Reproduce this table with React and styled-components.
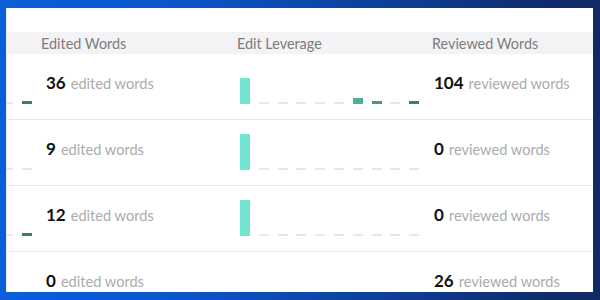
import React from "react";
import styled, { createGlobalStyle } from "styled-components";

const GlobalStyle = createGlobalStyle`
  html, body {
    margin: 0;
    padding: 0;
  }
  body {
    width: 600px;
    height: 300px;
    overflow: hidden;
    background: linear-gradient(90deg, #0a5fd8 0%, #0b56c9 30%, #0d3f98 65%, #102c6e 90%, #112a66 100%);
    font-family: "Lato", "Liberation Sans", sans-serif;
  }
`;

const Page = styled.div`
  padding: 8px 7px;
`;

const Panel = styled.div`
  background: #ffffff;
  height: 284px;
  overflow: hidden;
  box-shadow: -1px 0 0 #e8eef8;
`;

const TopGap = styled.div`
  height: 24px;
`;

const Grid = styled.div`
  display: grid;
  grid-template-columns: 30px 196px 195px 1fr;
`;

const HeaderRow = styled(Grid)`
  height: 22px;
  background: #f3f3f5;
  align-items: center;
`;

const HeaderCell = styled.div`
  padding-left: 4px;
  font-size: 14.4px;
  color: #7c7c7c;
  white-space: nowrap;
`;

const Row = styled(Grid)`
  height: 65px;
  border-bottom: 1px solid #e5e5ea;
`;

const TextCell = styled.div`
  padding-left: ${(p) => p.$indent}px;
  padding-top: 19px;
  line-height: 20px;
  white-space: nowrap;
`;

const Num = styled.span`
  font-size: 17px;
  font-weight: 700;
  color: #111111;
  margin-right: 5px;
`;

const Label = styled.span`
  font-size: 14.6px;
  color: #ababab;
`;

const ChartCell = styled.div`
  overflow: hidden;
  padding-top: 14px;
  padding-left: ${(p) => p.$indent || 0}px;
  padding-right: ${(p) => p.$trail || 0}px;
`;

const Bars = styled.div`
  height: 36px;
  display: flex;
  align-items: flex-end;
  justify-content: ${(p) => (p.$end ? "flex-end" : "flex-start")};
  gap: 8.8px;
`;

const tones = {
  light: "#e4e6ee",
  aqua: "#72e5d1",
  mid: "#4fae97",
  teal: "#45998a",
  dark: "#3d7b6f",
};

const Bar = styled.div`
  flex: none;
  width: 10px;
  height: ${(p) => p.$h}px;
  background: ${(p) => tones[p.$tone]};
`;

const L = [2, "light"];

const rows = [
  {
    tail: [L, L, [3, "dark"]],
    edited: 36,
    leverage: [[26, "aqua"], L, L, L, L, L, [6, "mid"], [3, "teal"], L, [3, "dark"]],
    reviewed: 104,
  },
  {
    tail: [L, L, L],
    edited: 9,
    leverage: [[36, "aqua"], L, L, L, L, L, L, L, L, L],
    reviewed: 0,
  },
  {
    tail: [L, L, [3, "dark"]],
    edited: 12,
    leverage: [[36, "aqua"], L, L, L, L, L, L, L, L, L],
    reviewed: 0,
  },
  {
    tail: [],
    edited: 0,
    leverage: [],
    reviewed: 26,
  },
];

const BarChart = ({ data, end }) => (
  <Bars $end={end}>
    {data.map(([h, tone], i) => (
      <Bar key={i} $h={h} $tone={tone} />
    ))}
  </Bars>
);

export default function App() {
  return (
    <Page>
      <GlobalStyle />
      <Panel>
        <TopGap />
        <HeaderRow>
          <HeaderCell />
          <HeaderCell>Edited Words</HeaderCell>
          <HeaderCell>Edit Leverage</HeaderCell>
          <HeaderCell>Reviewed Words</HeaderCell>
        </HeaderRow>
        {rows.map((r, i) => (
          <Row key={i}>
            <ChartCell $trail={5}>
              <BarChart data={r.tail} end />
            </ChartCell>
            <TextCell $indent={9}>
              <Num>{r.edited}</Num>
              <Label>edited words</Label>
            </TextCell>
            <ChartCell $indent={7}>
              <BarChart data={r.leverage} />
            </ChartCell>
            <TextCell $indent={6}>
              <Num>{r.reviewed}</Num>
              <Label>reviewed words</Label>
            </TextCell>
          </Row>
        ))}
      </Panel>
    </Page>
  );
}
